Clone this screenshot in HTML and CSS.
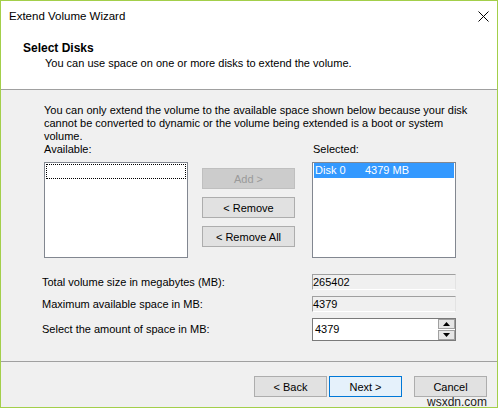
FILE: index.html
```html
<!DOCTYPE html>
<html lang="en">
<head>
    <meta charset="UTF-8">
    <title>Extend Volume Wizard</title>
    <link rel="stylesheet" href="styles.css">
</head>
<body>
    <div class="window">
        <div class="top">
            <div class="titlebar">
                <span class="title">Extend Volume Wizard</span>
                <svg class="close" width="11" height="11" viewBox="0 0 11 11">
                    <path d="M0.5 0.5 L10.5 10.5 M10.5 0.5 L0.5 10.5" stroke="#000" stroke-width="1" fill="none"/>
                </svg>
            </div>
            <div class="header">
                <div class="head-title">Select Disks</div>
                <div class="head-sub">You can use space on one or more disks to extend the volume.</div>
            </div>
        </div>

        <div class="content">
            <p class="note">You can only extend the volume to the available space shown below because your disk<br>cannot be converted to dynamic or the volume being extended is a boot or system<br>volume.</p>

            <div class="pickers">
                <div class="list-col">
                    <div class="list-label">Available:</div>
                    <div class="listbox">
                        <div class="focus-row"></div>
                    </div>
                </div>
                <div class="btn-col">
                    <button class="btn" disabled>Add &gt;</button>
                    <button class="btn">&lt; Remove</button>
                    <button class="btn">&lt; Remove All</button>
                </div>
                <div class="list-col list-right">
                    <div class="list-label">Selected:</div>
                    <div class="listbox">
                        <div class="sel-row"><span class="disk-name">Disk 0</span><span>4379 MB</span></div>
                    </div>
                </div>
            </div>

            <div class="fields">
                <div class="field-label">Total volume size in megabytes (MB):</div>
                <div class="readonly">265402</div>
                <div class="field-label">Maximum available space in MB:</div>
                <div class="readonly">4379</div>
                <div class="field-label">Select the amount of space in MB:</div>
                <div class="spin">
                    <div class="spin-value">4379</div>
                    <div class="spin-buttons">
                        <div class="spin-btn">
                            <svg width="7" height="4" viewBox="0 0 7 4"><path d="M3.5 0 L7 4 L0 4 Z" fill="#000"/></svg>
                        </div>
                        <div class="spin-btn">
                            <svg width="7" height="4" viewBox="0 0 7 4"><path d="M0 0 L7 0 L3.5 4 Z" fill="#000"/></svg>
                        </div>
                    </div>
                </div>
            </div>
        </div>

        <div class="footer">
            <button class="btn nav-btn">&lt; Back</button>
            <button class="btn nav-btn default">Next &gt;</button>
            <button class="btn nav-btn cancel">Cancel</button>
        </div>

        <div class="watermark">wsxdn.com</div>
    </div>
</body>
</html>
```

FILE: styles.css
```css
* {
    box-sizing: border-box;
}
html, body {
    margin: 0;
    background-color: #fff;
}
.window {
    position: relative;
    width: 498px;
    height: 408px;
    border: 1px solid #a3cf4a;
    display: flex;
    flex-direction: column;
    font-family: "Liberation Sans", Arial, sans-serif;
    font-size: 11px;
    color: #000;
}
.top {
    height: 89px;
    background-color: #fff;
    border-bottom: 1px solid #a0a0a0;
}
.titlebar {
    height: 30px;
    display: flex;
    align-items: center;
    justify-content: space-between;
    padding: 0 8px 0 8px;
}
.title {
    font-size: 11.5px;
    line-height: 30px;
}
.close {
    display: block;
}
.header {
    padding: 10px 0 0 22px;
}
.head-title {
    font-size: 12px;
    font-weight: bold;
    line-height: 14px;
}
.head-sub {
    margin-top: 2px;
    padding-left: 22px;
    line-height: 13px;
}
.content {
    flex: 1;
    background-color: #f0f0f0;
    padding: 14px 0 0 43px;
}
.note {
    margin: 0;
    line-height: 13px;
}
.pickers {
    display: flex;
}
.list-label {
    line-height: 13px;
}
.list-right .list-label {
    padding-left: 1px;
}
.listbox {
    width: 144px;
    height: 96px;
    margin-top: 6px;
    border: 1px solid #828790;
    background-color: #fff;
    padding: 1px;
}
.focus-row {
    height: 15px;
    border: 1px dotted #000;
}
.list-right .listbox {
    padding: 0 1px;
}
.sel-row {
    height: 15px;
    line-height: 15px;
    background-color: #3399ff;
    color: #fff;
    padding-left: 1px;
}
.disk-name {
    display: inline-block;
    width: 50px;
}
.btn-col {
    width: 93px;
    margin: 25px 0 0 14px;
    display: flex;
    flex-direction: column;
    gap: 8px;
}
.list-right {
    margin-left: 17px;
}
.btn {
    height: 21px;
    padding: 0;
    border: 1px solid #adadad;
    background-color: #e1e1e1;
    font-family: inherit;
    font-size: 11px;
    color: #000;
}
.btn:disabled {
    background-color: #cccccc;
    border-color: #bfbfbf;
    color: #9a9a9a;
}
.fields {
    margin: 16px 0 0 -2px;
    display: grid;
    grid-template-columns: 270px 144px;
    grid-template-rows: 16px 16px 23px;
    row-gap: 6px;
    align-items: center;
}
.field-label {
    line-height: 13px;
}
.readonly {
    height: 16px;
    line-height: 14px;
    border: 1px solid;
    border-color: #a0a0a0 #e3e3e3 #fff #a0a0a0;
    background-color: #f0f0f0;
}
.spin {
    height: 23px;
    display: flex;
    border: 1px solid #7a7a7a;
    background-color: #fff;
}
.spin-value {
    flex: 1;
    padding-left: 2px;
    line-height: 21px;
}
.spin-buttons {
    width: 17px;
    display: flex;
    flex-direction: column;
    gap: 1px;
}
.spin-btn {
    height: 10px;
    border: 1px solid #a0a0a0;
    background-color: #e6e6e6;
    display: flex;
    align-items: center;
    justify-content: center;
}
.spin-btn svg {
    display: block;
}
.footer {
    height: 46px;
    border-top: 1px solid #a0a0a0;
    background-color: #f0f0f0;
    padding: 14px 10px 0 0;
    display: flex;
    justify-content: flex-end;
    align-items: flex-start;
    gap: 2px;
}
.nav-btn {
    width: 73px;
}
.default {
    border-color: #0078d7;
    background-color: #e5f1fb;
}
.cancel {
    margin-left: 10px;
}
.watermark {
    position: absolute;
    top: 394px;
    left: 426px;
    font-size: 12px;
    line-height: 14px;
    color: #222;
}
```
